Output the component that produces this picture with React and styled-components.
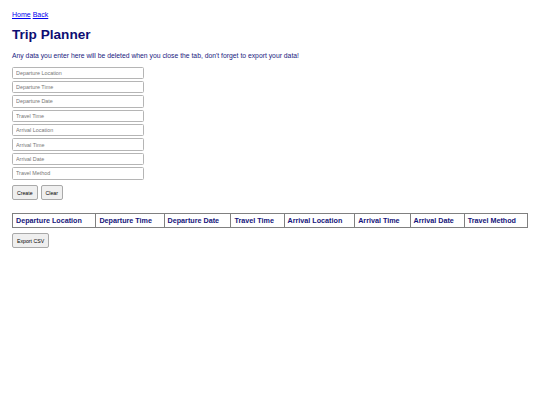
import React, { useState } from "react";
import styled, { createGlobalStyle } from "styled-components";

const GlobalStyle = createGlobalStyle`
  body {
    margin: 0;
    background: #ffffff;
    font-family: "Liberation Sans", Arial, sans-serif;
  }
`;

const Page = styled.div`
  padding: 10px 12px;
  color: #14147a;
`;

const Nav = styled.nav`
  font-size: 7px;
  line-height: 10px;
  a {
    color: #0000ee;
    text-decoration: underline;
    margin-right: 2px;
  }
`;

const Title = styled.h1`
  font-size: 13.6px;
  line-height: 16px;
  margin: 6.5px 0 8px;
  color: #0d0d73;
`;

const Notice = styled.p`
  font-size: 6.8px;
  line-height: 9px;
  margin: 0 0 6px;
  color: #1a1a80;
`;

const Form = styled.form`
  display: flex;
  flex-direction: column;
  align-items: flex-start;
`;

const Field = styled.input`
  box-sizing: border-box;
  width: 132px;
  height: 12.4px;
  margin: 1px 0;
  padding: 0 3px;
  border: 1px solid #b5b5b5;
  border-radius: 1.5px;
  font-family: "Liberation Sans", Arial, sans-serif;
  font-size: 5.4px;
  &::placeholder {
    color: #777777;
  }
`;

const Buttons = styled.div`
  display: flex;
  gap: 3px;
  margin-top: 4.5px;
`;

const Button = styled.button`
  box-sizing: border-box;
  height: 15px;
  padding: 0 4px;
  border: 1px solid #a9a9a9;
  border-radius: 2px;
  background: #efefef;
  color: #000;
  font-family: "Liberation Sans", Arial, sans-serif;
  font-size: 5.2px;
`;

const Table = styled.table`
  width: 100%;
  margin-top: 13px;
  border-collapse: collapse;
  border: 1px solid #808080;
`;

const Th = styled.th`
  text-align: left;
  font-size: 7.2px;
  line-height: 8px;
  padding: 2.5px 3px;
  border: 1px solid #808080;
  color: #14147a;
  white-space: nowrap;
`;

const Footer = styled.div`
  display: flex;
  margin-top: 5px;
`;

const fields = [
  "Departure Location",
  "Departure Time",
  "Departure Date",
  "Travel Time",
  "Arrival Location",
  "Arrival Time",
  "Arrival Date",
  "Travel Method",
];

export default function App() {
  const [values, setValues] = useState({});

  return (
    <>
      <GlobalStyle />
      <Page>
        <Nav>
          <a href="#">Home</a>
          <a href="#">Back</a>
        </Nav>
        <Title>Trip Planner</Title>
        <Notice>
          Any data you enter here will be deleted when you close the tab, don't
          forget to export your data!
        </Notice>
        <Form onSubmit={(e) => e.preventDefault()}>
          {fields.map((f) => (
            <Field
              key={f}
              placeholder={f}
              value={values[f] || ""}
              onChange={(e) => setValues({ ...values, [f]: e.target.value })}
            />
          ))}
          <Buttons>
            <Button type="submit">Create</Button>
            <Button type="button" onClick={() => setValues({})}>
              Clear
            </Button>
          </Buttons>
        </Form>
        <Table>
          <thead>
            <tr>
              {fields.map((f) => (
                <Th key={f}>{f}</Th>
              ))}
            </tr>
          </thead>
        </Table>
        <Footer>
          <Button>Export CSV</Button>
        </Footer>
      </Page>
    </>
  );
}
